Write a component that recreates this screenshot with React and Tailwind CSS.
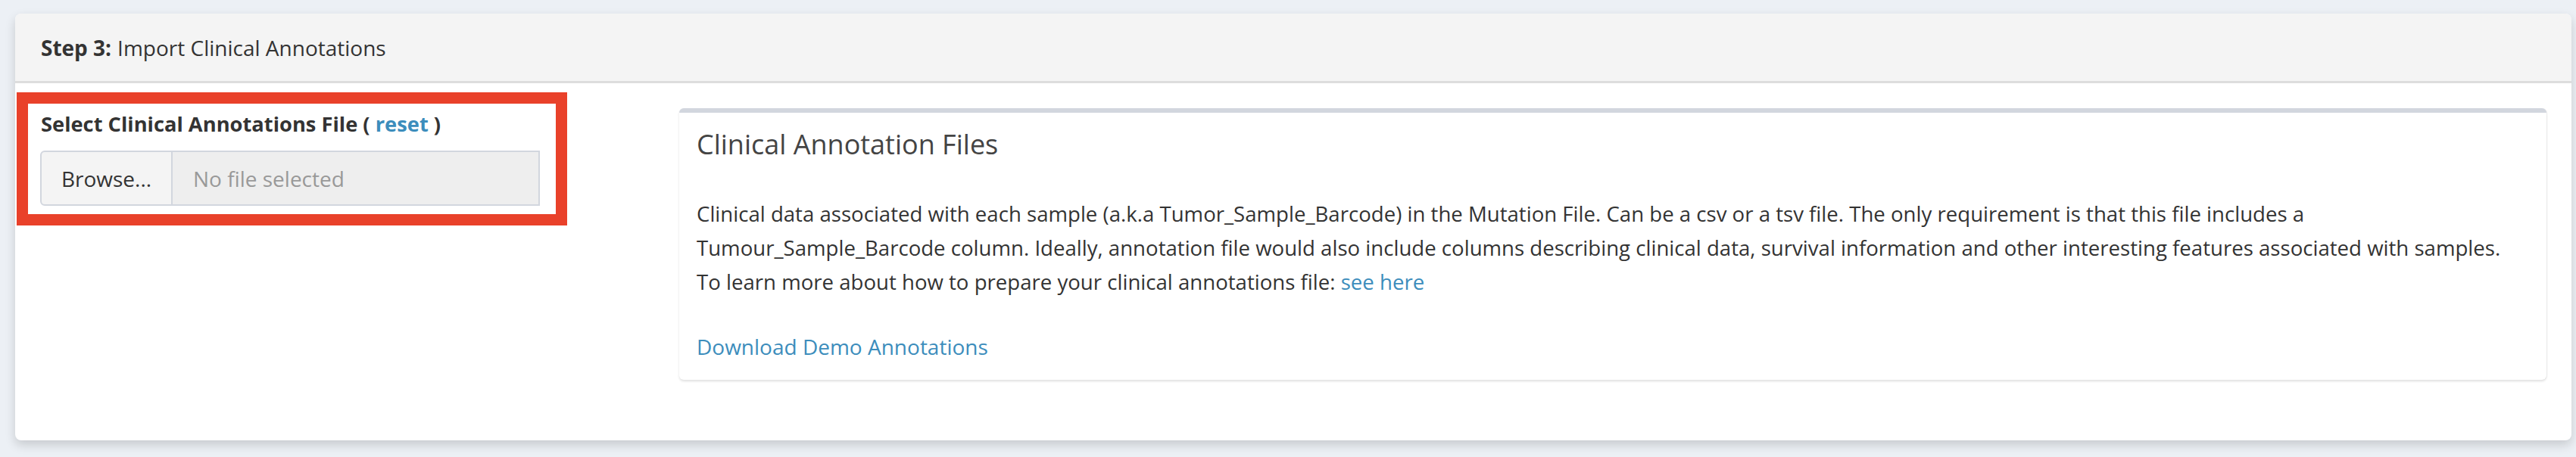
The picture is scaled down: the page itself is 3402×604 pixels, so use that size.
import React from "react";

const FileInput = () => (
  <div className="flex h-[73px] w-[660px] text-[28px] leading-[38px]">
    <div className="flex items-center w-[175px] justify-center bg-[#f4f4f4] border-2 border-[#d2d6de] rounded-l-[6px] text-[#333]">
      Browse...
    </div>
    <div className="flex-1 flex items-center pl-[27px] bg-[#eeeeee] border-y-2 border-r-2 border-[#d2d6de] text-[#999]">
      No file selected
    </div>
  </div>
);

export default function App() {
  return (
    <div className="min-h-[604px] bg-[#ecf0f5] pt-[18px] pl-[20px] font-['Open_Sans',sans-serif] text-[#333]">
      <div className="w-[3376px] bg-white rounded-[8px] shadow-[0_6px_14px_rgba(0,0,0,0.16)] overflow-hidden">
        {/* Header */}
        <div className="h-[92px] flex items-center pl-[34px] bg-[#f4f4f4] border-b-[3px] border-[#dddddd] text-[28px] leading-[38px]">
          <span className="font-bold mr-[8px]">Step 3:</span>
          <span>Import Clinical Annotations</span>
        </div>

        {/* Body */}
        <div className="flex items-start pb-[80px]">
          {/* Annotated form group */}
          <div className="mt-[12px] ml-[2px] w-[727px] border-[15px] border-[#e9412a] bg-white pl-[16px] pr-[21px] pt-[8px] pb-[11px]">
            <div className="text-[27.3px] leading-[38px] font-bold pl-[1px]">
              Select Clinical Annotations File ({" "}
              <a className="text-[#3c8dbc]" href="#">reset</a> )
            </div>
            <div className="mt-[16px]">
              <FileInput />
            </div>
          </div>

          {/* Info box */}
          <div className="ml-[148px] mt-[33px] flex-1 mr-[33px] bg-white border-t-[6px] border-[#d2d6de] rounded-[6px] shadow-[0_2px_3px_rgba(0,0,0,0.12),1px_0_0_rgba(0,0,0,0.04)] px-[23px] pb-[21px]">
            <div className="mt-[22px] text-[36px] leading-[40px] text-[#444]">
              Clinical Annotation Files
            </div>
            <p className="mt-[49px] text-[27.6px] leading-[45px] whitespace-nowrap">
              Clinical data associated with each sample (a.k.a Tumor_Sample_Barcode) in the Mutation File. Can be a csv or a tsv file. The only requirement is that this file includes a
              <br />
              Tumour_Sample_Barcode column. Ideally, annotation file would also include columns describing clinical data, survival information and other interesting features associated with samples.
              <br />
              To learn more about how to prepare your clinical annotations file:{" "}
              <a className="text-[#3c8dbc]" href="#">see here</a>
            </p>
            <div className="mt-[41px] text-[28px] leading-[45px]">
              <a className="text-[#3c8dbc]" href="#">Download Demo Annotations</a>
            </div>
          </div>
        </div>
      </div>
    </div>
  );
}
